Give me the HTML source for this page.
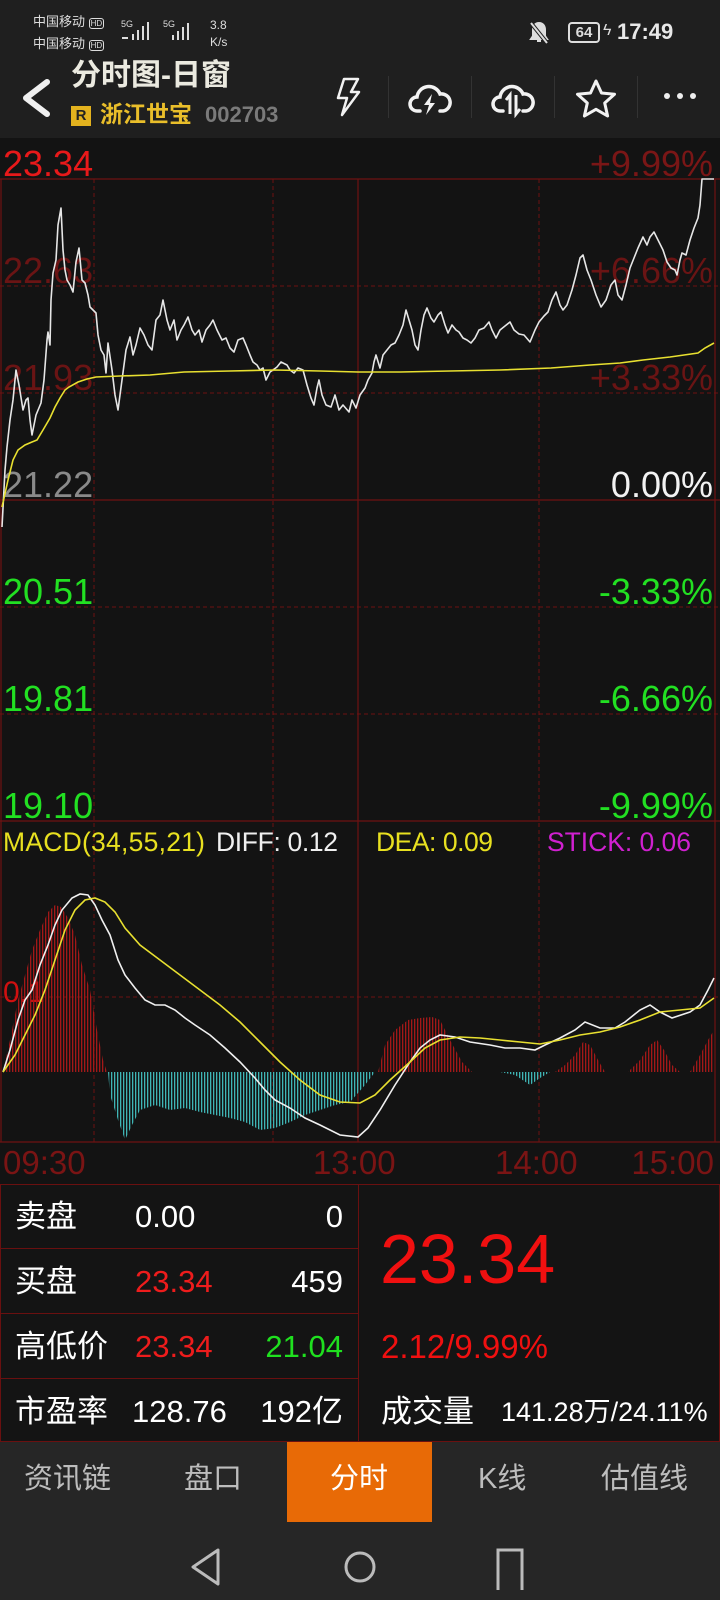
<!DOCTYPE html>
<html><head><meta charset="utf-8"><style>
*{margin:0;padding:0;box-sizing:border-box}
body{width:720px;height:1600px;background:#131313;font-family:"Liberation Sans","Noto Sans CJK SC",sans-serif;position:relative;overflow:hidden;color:#fff}
.a{position:absolute;white-space:nowrap;line-height:1}
.hdr{position:absolute;left:0;top:0;width:720px;height:138px;background:#1f1f1f}
.tabs{position:absolute;left:0;top:1442px;width:720px;height:80px;background:#262626}
.nav{position:absolute;left:0;top:1522px;width:720px;height:78px;background:#262626}
.tab{position:absolute;top:1465px;font-size:29px;color:#bdbdbd}
.tbl{position:absolute;left:0;top:1184px;width:720px;height:258px;border:1px solid #6a1010;background:#141414}
.cell{font-size:31px}
</style></head><body>
<div class="hdr"></div>
<div class="a" style="left:33px;top:15px;font-size:13px;color:#ddd">中国移动 <span style="font-size:8px;border:1px solid #ddd;border-radius:3px;padding:0 1px">HD</span></div>
<div class="a" style="left:33px;top:37px;font-size:13px;color:#ddd">中国移动 <span style="font-size:8px;border:1px solid #ddd;border-radius:3px;padding:0 1px">HD</span></div>
<div class="a" style="left:121px;top:20px;font-size:9px;color:#ddd">5G</div>
<svg class="a" style="left:120px;top:20px" width="100" height="26"><g fill="#ddd"><rect x="12" y="14" width="2" height="6"/><rect x="17" y="10" width="2" height="10"/><rect x="22" y="6" width="2" height="14"/><rect x="27" y="2" width="2" height="18"/><rect x="2" y="17" width="6" height="2"/><rect x="52" y="15" width="2" height="5"/><rect x="57" y="11" width="2" height="9"/><rect x="62" y="7" width="2" height="13"/><rect x="67" y="3" width="2" height="17"/></g></svg>
<div class="a" style="left:163px;top:20px;font-size:9px;color:#ddd">5G</div>
<div class="a" style="left:210px;top:17px;font-size:12px;color:#ddd;line-height:17px">3.8<br>K/s</div>
<svg class="a" style="left:528px;top:20px" width="22" height="26"><path d="M11 3c-4 0-6 3-6 7v6l-2 3h16l-2-3v-6c0-4-2-7-6-7zM9 21h4" stroke="#ddd" stroke-width="2" fill="#ddd"/><path d="M3 3l16 20" stroke="#1f1f1f" stroke-width="4"/><path d="M3 3l16 20" stroke="#ddd" stroke-width="2"/></svg>
<div class="a" style="left:568px;top:22px;width:32px;height:21px;border:2px solid #ddd;border-radius:4px;font-size:15px;color:#ddd;text-align:center;line-height:17px;font-weight:bold">64</div>
<div class="a" style="left:603px;top:23px;font-size:16px;color:#ddd">ϟ</div>
<div class="a" style="left:617px;top:21px;font-size:22px;color:#e8e8e8;font-weight:bold">17:49</div>
<svg class="a" style="left:18px;top:78px" width="34" height="40"><path d="M29 4L8 20l21 16" stroke="#f0f0f0" stroke-width="6" fill="none" stroke-linecap="round" stroke-linejoin="round"/></svg>
<div class="a" style="left:71px;top:61px;font-size:30px;font-weight:bold;color:#ebeae0">分时图-日窗</div>
<div class="a" style="left:71px;top:106px;width:20px;height:20px;background:#e3b21e;color:#222;font-size:15px;font-weight:bold;text-align:center;line-height:20px">R</div>
<div class="a" style="left:100px;top:103px;font-size:23px;font-weight:bold;color:#e9be2a">浙江世宝</div>
<div class="a" style="left:205px;top:104px;font-size:22px;font-weight:bold;color:#7a7a7a">002703</div>
<svg class="a" style="left:330px;top:76px" width="32" height="42"><path d="M14 3h14l-7 13h8L12 39l5-17h-9z" stroke="#f2f2f2" stroke-width="2.5" fill="none" stroke-linejoin="round"/></svg>
<div class="a" style="left:388px;top:76px;width:1px;height:42px;background:#333"></div>
<div class="a" style="left:471px;top:76px;width:1px;height:42px;background:#333"></div>
<div class="a" style="left:554px;top:76px;width:1px;height:42px;background:#333"></div>
<div class="a" style="left:637px;top:76px;width:1px;height:42px;background:#333"></div>
<svg class="a" style="left:408px;top:78px" width="44" height="40"><path d="M12 33H9a7 7 0 0 1 0-14 12 12 0 0 1 23-3 8.5 8.5 0 0 1 3 17h-3" stroke="#f2f2f2" stroke-width="3.5" fill="none" stroke-linecap="round"/><path d="M24 16l-8 11h5l-3 10 9-12h-5z" fill="#f2f2f2"/></svg>
<svg class="a" style="left:491px;top:78px" width="44" height="40"><path d="M12 33H9a7 7 0 0 1 0-14 12 12 0 0 1 23-3 8.5 8.5 0 0 1 3 17h-3" stroke="#f2f2f2" stroke-width="3.5" fill="none" stroke-linecap="round"/><path d="M19 36V17l-4 5M25 17v19l4-5" stroke="#f2f2f2" stroke-width="3" fill="none"/></svg>
<svg class="a" style="left:574px;top:77px" width="44" height="42"><path d="M22 4l5.5 12 13 1.3-9.8 8.7 2.9 13L22 32.3 10.4 39l2.9-13-9.8-8.7 13-1.3z" stroke="#f2f2f2" stroke-width="3" fill="none" stroke-linejoin="round"/></svg>
<svg class="a" style="left:662px;top:90px" width="36" height="12"><circle cx="5" cy="6" r="3" fill="#eee"/><circle cx="18" cy="6" r="3" fill="#eee"/><circle cx="31" cy="6" r="3" fill="#eee"/></svg>

<svg class="a" style="left:0;top:138px" width="720" height="1046" viewBox="0 138 720 1046">
<defs><pattern id="pr" width="3" height="10" patternUnits="userSpaceOnUse"><rect width="1.3" height="10" fill="#a31818"/></pattern>
<pattern id="pc" width="3" height="10" patternUnits="userSpaceOnUse"><rect width="1.3" height="10" fill="#3fb5b5"/></pattern></defs>
<g stroke="#6e1212" stroke-width="1.2" fill="none">
<line x1="0" y1="179" x2="720" y2="179"/><line x1="0" y1="500" x2="720" y2="500"/><line x1="0" y1="821" x2="720" y2="821"/><line x1="0" y1="1142" x2="720" y2="1142"/>
<line x1="1" y1="179" x2="1" y2="1142"/><line x1="358" y1="179" x2="358" y2="1142"/><line x1="715" y1="179" x2="715" y2="1142"/>
</g>
<g stroke="#6e1212" stroke-width="1" stroke-dasharray="4 3" fill="none">
<line x1="0" y1="286" x2="720" y2="286"/><line x1="0" y1="393" x2="720" y2="393"/><line x1="0" y1="607" x2="720" y2="607"/><line x1="0" y1="714" x2="720" y2="714"/><line x1="0" y1="997" x2="720" y2="997"/>
<line x1="94" y1="179" x2="94" y2="1142"/><line x1="273" y1="179" x2="273" y2="1142"/><line x1="539" y1="179" x2="539" y2="1142"/>
</g>
<g font-family="Liberation Sans,sans-serif" font-size="36">
<text x="3" y="176" fill="#e8191a">23.34</text><text x="713" y="176" fill="#7a1616" text-anchor="end">+9.99%</text>
<text x="3" y="283" fill="#6a1414">22.63</text><text x="713" y="283" fill="#6a1414" text-anchor="end">+6.66%</text>
<text x="3" y="390" fill="#6a1414">21.93</text><text x="713" y="390" fill="#6a1414" text-anchor="end">+3.33%</text>
<text x="3" y="497" fill="#8a8a8a">21.22</text><text x="713" y="497" fill="#f2f2f2" text-anchor="end">0.00%</text>
<text x="3" y="604" fill="#22e022">20.51</text><text x="713" y="604" fill="#22e022" text-anchor="end">-3.33%</text>
<text x="3" y="711" fill="#22e022">19.81</text><text x="713" y="711" fill="#22e022" text-anchor="end">-6.66%</text>
<text x="3" y="818" fill="#22e022">19.10</text><text x="713" y="818" fill="#22e022" text-anchor="end">-9.99%</text>
<text x="3" y="1002" fill="#d01010" font-size="30">0.1</text>
<text x="3" y="1174" fill="#7a1414" font-size="33">09:30</text><text x="313" y="1174" fill="#7a1414" font-size="33">13:00</text><text x="495" y="1174" fill="#7a1414" font-size="33">14:00</text><text x="714" y="1174" fill="#7a1414" font-size="33" text-anchor="end">15:00</text>
</g>
<g font-family="Liberation Sans,sans-serif" font-size="26.5">
<text x="3" y="851" fill="#e8e020" textLength="202">MACD(34,55,21)</text><text x="216" y="851" fill="#f0f0f0" textLength="122">DIFF: 0.12</text><text x="376" y="851" fill="#e8e020" textLength="117">DEA: 0.09</text><text x="547" y="851" fill="#d020d0" textLength="144">STICK: 0.06</text>
</g>
<polyline fill="none" stroke="#e6e6e6" stroke-width="1.6" stroke-linejoin="round" points="2,527 5,470 7,447 10,420 13,400 16,370 19,385 23,410 26,400 28,398 30,420 32,435 36,415 41,403 44,380 47,340 48,332 50,345 51,300 53,273 56,260 58,225 61,208 63,250 65,270 67,280 70,285 73,292 76,262 79,248 82,280 85,283 88,295 90,307 93,310 96,313 98,335 101,350 104,355 106,373 108,343 112,370 115,395 118,410 122,380 126,350 130,337 133,355 136,345 140,328 144,335 148,345 152,350 156,320 160,315 163,300 167,320 170,330 174,320 177,340 181,330 184,325 188,317 192,330 195,335 199,330 202,342 206,330 210,325 213,320 217,330 222,340 226,338 230,348 234,352 238,340 243,338 246,345 250,355 253,362 257,365 260,370 263,368 266,380 270,372 273,370 277,367 281,362 287,365 290,370 294,373 298,368 303,370 307,385 311,398 314,405 317,388 319,380 322,395 326,405 331,407 335,395 339,410 343,405 349,412 352,400 356,408 360,395 365,388 368,380 372,373 374,362 376,355 380,368 383,355 387,350 391,345 395,343 399,335 403,325 406,310 409,320 412,330 415,345 418,350 421,330 424,315 427,308 431,318 434,322 438,315 441,312 445,325 448,333 452,325 456,330 459,332 463,338 467,340 471,343 475,338 479,330 484,328 489,322 492,330 496,338 500,330 505,326 510,322 514,330 519,334 524,335 530,342 535,330 539,322 544,316 548,312 552,300 556,292 560,305 563,310 567,305 572,290 576,275 580,258 583,255 587,270 591,280 596,295 601,307 606,300 611,285 615,280 618,295 622,300 626,285 630,268 634,258 638,248 643,237 647,245 650,237 654,232 658,240 663,250 667,262 671,268 675,270 677,275 680,260 682,253 686,255 690,240 694,228 698,218 700,205 702,179 714,179"/>
<polyline fill="none" stroke="#e8e030" stroke-width="1.6" points="2,507 8,480 13,460 18,450 25,445 32,442 37,440 43,430 50,418 55,407 60,398 65,390 69,387 78,382 87,379 96,377 120,376 150,375 184,372 230,371 275,370 320,371 358,372 400,372 450,371 500,370 551,368 590,365 620,363 643,360 670,357 698,353 705,348 714,343"/>
<path fill="url(#pr)" d="M3,1072 L10,1040 18,1000 25,975 32,950 40,930 48,912 55,905 61,907 68,918 75,935 82,965 90,990 97,1030 103,1060 107,1072Z"/>
<path fill="url(#pc)" d="M108,1072 L110,1095 118,1120 125,1140 132,1125 140,1110 155,1105 170,1110 185,1108 200,1112 215,1115 230,1118 245,1122 260,1130 275,1128 290,1122 305,1115 320,1110 335,1105 350,1102 365,1085 375,1072Z"/>
<path fill="url(#pr)" d="M378,1072 L385,1045 395,1030 408,1020 420,1018 432,1017 440,1020 450,1040 462,1062 472,1072Z"/>
<path fill="url(#pc)" d="M500,1072 L515,1075 530,1085 540,1078 550,1072Z"/>
<path fill="url(#pr)" d="M555,1072 L565,1065 575,1055 583,1042 590,1045 598,1060 605,1072Z M628,1072 L640,1060 650,1045 657,1040 664,1050 672,1065 680,1072Z M690,1072 L700,1055 708,1040 714,1030 714,1072Z"/>
<polyline fill="none" stroke="#f0f0f0" stroke-width="1.6" points="3,1072 10,1050 18,1020 25,1000 32,990 40,965 48,945 55,925 62,910 72,898 80,894 88,895 95,905 102,920 110,935 118,960 125,975 135,988 145,1000 155,1005 165,1005 175,1010 185,1018 195,1025 210,1035 225,1048 240,1062 255,1078 265,1090 275,1100 290,1108 305,1118 320,1125 340,1135 358,1137 368,1128 380,1110 395,1085 410,1062 420,1048 430,1040 440,1035 455,1037 470,1042 490,1045 505,1048 520,1048 535,1050 545,1045 560,1038 575,1030 585,1022 600,1028 615,1028 625,1022 640,1010 650,1005 660,1012 672,1018 690,1012 700,1005 708,990 714,978"/>
<polyline fill="none" stroke="#e8e030" stroke-width="1.6" points="3,1072 15,1055 25,1035 35,1015 45,990 55,960 65,930 75,910 85,900 95,898 105,902 115,912 125,928 140,945 160,960 180,975 200,990 220,1005 240,1022 260,1042 280,1062 300,1080 320,1095 340,1102 360,1103 375,1095 390,1080 410,1062 425,1048 440,1040 460,1037 480,1038 500,1040 520,1042 540,1044 560,1040 580,1035 600,1032 620,1027 640,1020 660,1012 680,1010 700,1008 714,998"/>
</svg>

<div class="tbl"></div>
<div class="a" style="left:358px;top:1184px;width:1px;height:258px;background:#6a1010"></div>
<div class="a" style="left:0;top:1248px;width:358px;height:1px;background:#6a1010"></div>
<div class="a" style="left:0;top:1313px;width:358px;height:1px;background:#6a1010"></div>
<div class="a" style="left:0;top:1378px;width:358px;height:1px;background:#6a1010"></div>
<div class="a cell" style="left:15px;top:1201px">卖盘</div>
<div class="a cell" style="left:135px;top:1201px">0.00</div>
<div class="a cell" style="left:283px;top:1201px;width:60px;text-align:right">0</div>
<div class="a cell" style="left:15px;top:1266px">买盘</div>
<div class="a cell" style="left:135px;top:1266px;color:#ee1c1c">23.34</div>
<div class="a cell" style="left:263px;top:1266px;width:80px;text-align:right">459</div>
<div class="a cell" style="left:15px;top:1331px">高低价</div>
<div class="a cell" style="left:135px;top:1331px;color:#ee1c1c">23.34</div>
<div class="a cell" style="left:243px;top:1331px;width:100px;text-align:right;color:#1fe01f">21.04</div>
<div class="a cell" style="left:15px;top:1396px">市盈率</div>
<div class="a cell" style="left:132px;top:1396px">128.76</div>
<div class="a cell" style="left:243px;top:1396px;width:100px;text-align:right">192亿</div>
<div class="a" style="left:380px;top:1224px;font-size:70px;color:#f01010">23.34</div>
<div class="a" style="left:381px;top:1330px;font-size:33px;color:#f01010">2.12/9.99%</div>
<div class="a cell" style="left:381px;top:1396px">成交量</div>
<div class="a" style="left:501px;top:1399px;font-size:27px">141.28万/24.11%</div>

<div class="tabs"></div>
<div class="a" style="left:287px;top:1442px;width:145px;height:80px;background:#e86a06"></div>
<div class="a tab" style="left:24px">资讯链</div>
<div class="a tab" style="left:184px">盘口</div>
<div class="a tab" style="left:330px;color:#fff">分时</div>
<div class="a tab" style="left:478px">K线</div>
<div class="a tab" style="left:601px">估值线</div>

<div class="nav"></div>
<svg class="a" style="left:185px;top:1540px" width="350" height="50"><path d="M33 10L8 27l25 17z" stroke="#bbb" stroke-width="3" fill="none" stroke-linejoin="round"/><circle cx="175" cy="27" r="14" stroke="#bbb" stroke-width="3" fill="none"/><path d="M313 50V10h24v40" stroke="#bbb" stroke-width="3" fill="none"/></svg>
</body></html>
